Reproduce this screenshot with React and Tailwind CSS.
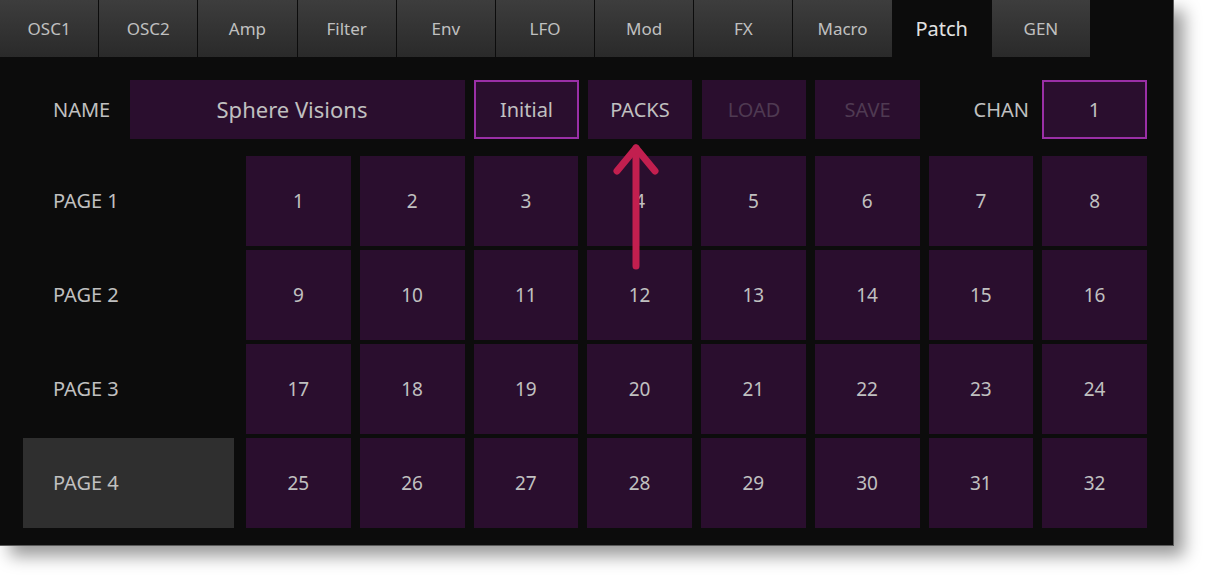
import React from 'react';

const tabs = ['OSC1', 'OSC2', 'Amp', 'Filter', 'Env', 'LFO', 'Mod', 'FX', 'Macro', 'Patch', 'GEN'];
const pages = ['PAGE 1', 'PAGE 2', 'PAGE 3', 'PAGE 4'];

const font = { fontFamily: '"Noto Sans", "Open Sans", sans-serif' };

export default function App() {
  return (
    <div className="w-[1215px] h-[580px] bg-white" style={font}>
      <div className="relative w-[1174px] h-[546px] bg-[#0c0c0c] border-r border-b border-[#5a5a5a] shadow-[10px_10px_16px_rgba(0,0,0,0.4)]">
        {/* Tab bar */}
        <div className="grid grid-cols-11 gap-px w-[1090px] h-[57px]">
          {tabs.map((t) =>
            t === 'Patch' ? (
              <div key={t} className="flex items-center justify-center text-[20px] text-[#e2e2e2]">
                {t}
              </div>
            ) : (
              <div
                key={t}
                className="flex items-center justify-center text-[17px] text-[#c0c0c0] bg-gradient-to-b from-[#3d3d3d] to-[#2a2a2a]"
              >
                {t}
              </div>
            )
          )}
        </div>

        {/* Name row */}
        <div className="flex items-center h-[59px] mt-[23px] pl-[23px]">
          <div className="w-[107px] pl-[30px] text-[20px] text-[#c0c0c0]">NAME</div>
          <div className="w-[335px] h-full flex items-center justify-center pr-[11px] bg-[#2a0e2e] text-[22px] text-[#c0c0c0]">
            Sphere Visions
          </div>
          <div className="ml-[9px] w-[105px] h-full flex items-center justify-center bg-[#2a0e2e] border-2 border-[#9a2fa6] text-[20px] text-[#c0c0c0]">
            Initial
          </div>
          <div className="ml-[9px] w-[104px] h-full flex items-center justify-center bg-[#2a0e2e] text-[20px] text-[#c0c0c0]">
            PACKS
          </div>
          <div className="ml-[10px] w-[104px] h-full flex items-center justify-center bg-[#2a0e2e] text-[20px] text-[#4f3a52]">
            LOAD
          </div>
          <div className="ml-[9px] w-[105px] h-full flex items-center justify-center bg-[#2a0e2e] text-[20px] text-[#4f3a52]">
            SAVE
          </div>
          <div className="w-[122px] pr-[13px] text-right text-[20px] text-[#c0c0c0]">CHAN</div>
          <div className="w-[105px] h-full flex items-center justify-center bg-[#2a0e2e] border-2 border-[#9a2fa6] text-[20px] text-[#c0c0c0]">
            1
          </div>
        </div>

        {/* Pages grid */}
        <div className="flex flex-col gap-[4px] mt-[17px] pl-[23px]">
          {pages.map((p, r) => (
            <div key={p} className="flex h-[90px]">
              <div
                className={
                  'w-[211px] mr-[12px] flex items-center pl-[30px] text-[20px] text-[#c0c0c0] ' +
                  (r === 3 ? 'bg-[#2f2f2f]' : '')
                }
              >
                {p}
              </div>
              <div className="grid grid-cols-8 gap-x-[9px] w-[901px]">
                {Array.from({ length: 8 }).map((_, c) => (
                  <div
                    key={c}
                    className="flex items-center justify-center bg-[#2a0e2e] text-[19px] text-[#c0c0c0]"
                  >
                    {r * 8 + c + 1}
                  </div>
                ))}
              </div>
            </div>
          ))}
        </div>

        {/* Arrow annotation */}
        <svg className="absolute left-0 top-0 pointer-events-none" width="1174" height="546">
          <g stroke="#c21f4f" strokeWidth="7" strokeLinecap="round" strokeLinejoin="round" fill="none">
            <line x1="636" y1="148" x2="636" y2="266" />
            <polyline points="617,171 636,148 655,171" />
          </g>
        </svg>
      </div>
    </div>
  );
}
